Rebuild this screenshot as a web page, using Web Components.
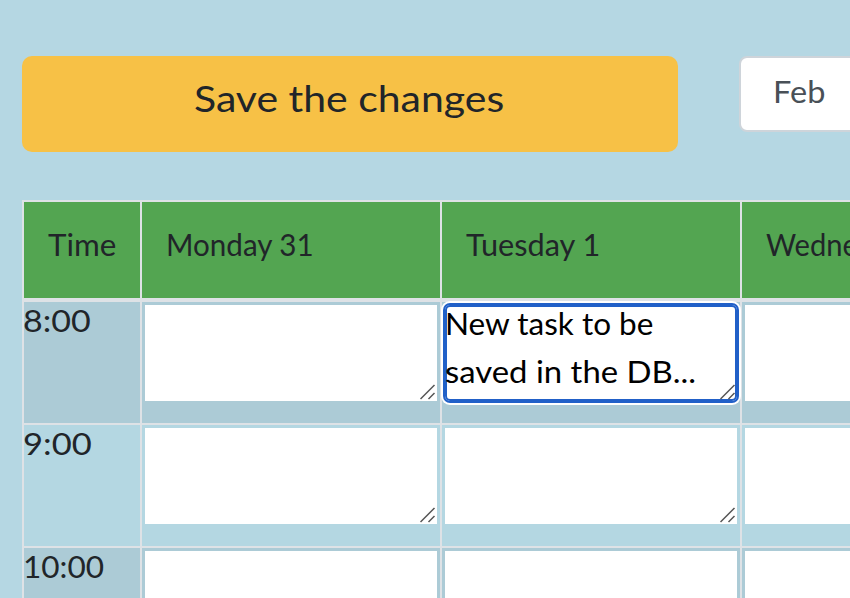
<!DOCTYPE html>
<html lang="en">
<head>
<meta charset="utf-8">
<title>Weekly planner</title>
<style>
html,body{margin:0;height:100%;overflow:hidden;background:#b5d7e3}
</style>
</head>
<body>
<week-planner></week-planner>
<script>
const define = (name, html, setup) => {
  const t = document.createElement('template');
  t.innerHTML = html;
  customElements.define(name, class extends HTMLElement {
    constructor() {
      super();
      this.attachShadow({mode: 'open'}).append(t.content.cloneNode(true));
    }
    connectedCallback() { if (setup) setup(this, this.shadowRoot); }
  });
};

// Text stretched horizontally to the width given in its "width" attribute.
define('fit-text', `
<style>
:host{display:block;white-space:nowrap}
span{display:inline-block;transform-origin:0 50%}
</style><span></span>`, (el, root) => {
  const s = root.querySelector('span');
  s.textContent = el.getAttribute('text');
  const w = +el.getAttribute('width');
  el.style.width = w + 'px';
  s.style.transform = `scaleX(${w / s.offsetWidth})`;
});

define('save-button', `
<style>
:host{display:flex;justify-content:center;box-sizing:border-box;width:656px;height:96px;padding:20px 2px 0 0;border-radius:10px;background:#f7c146;color:#212529;font-size:37px;line-height:44px}
</style><slot></slot>`);

define('month-field', `
<style>
:host{display:block;box-sizing:border-box;width:240px;height:76px;padding:16px 32px;border:2px solid #ced4da;border-radius:8px;background:#fff;color:#495057}
</style><slot></slot>`);

define('head-cell', `
<style>
:host{display:block;box-sizing:border-box;height:96px;padding:25px 0 0 24px;background:#53a551;overflow:hidden}
</style><slot></slot>`);

define('time-cell', `
<style>
:host{display:block;box-sizing:border-box;height:121px;padding-top:1px;background:var(--row)}
::slotted(*){margin-left:-1px}
</style><slot></slot>`);

define('task-cell', `
<style>
:host{display:block;box-sizing:border-box;height:121px;padding:3px;background:var(--row)}
.area{display:grid;grid-template-columns:1fr;width:292px;height:96px;background:#fff}
.text,svg{grid-area:1/1}
.text{display:flex;flex-direction:column;gap:14px;line-height:34px;color:#000;padding-top:1px}
svg{place-self:end;margin:0 1px 1px 0}
:host([focused]) .area{border-radius:5px;box-shadow:0 0 0 2px #2160c8,inset 0 0 0 2px #2160c8,0 0 0 4px #fff;position:relative}
</style>
<div class="area"><div class="text"><slot></slot></div>
<svg width="16" height="16" viewBox="0 0 16 16" fill="none" stroke="#555" stroke-width="1.5"><path d="M.5 15 14.5 1M8.500 15l6-6"/></svg></div>`);

define('week-table', `
<style>
:host{display:block;width:1020px;padding:2px;background:#dee2e6}
.row{display:grid;grid-template-columns:116px 298px 298px 298px;column-gap:2px;margin-bottom:2px;--row:#b4d7e2}
.head{margin-bottom:4px}
.odd{--row:#accbd6}
</style>
<div class="row head">
<head-cell><fit-text text="Time" width="68"></fit-text></head-cell>
<head-cell><fit-text text="Monday 31" width="148"></fit-text></head-cell>
<head-cell><fit-text text="Tuesday 1" width="134"></fit-text></head-cell>
<head-cell><fit-text text="Wednesday 2" width="174"></fit-text></head-cell>
</div>
<div class="row odd">
<time-cell><fit-text text="8:00" width="68"></fit-text></time-cell>
<task-cell></task-cell>
<task-cell focused><fit-text text="New task to be" width="208"></fit-text><fit-text text="saved in the DB..." width="251"></fit-text></task-cell>
<task-cell></task-cell>
</div>
<div class="row">
<time-cell><fit-text text="9:00" width="69"></fit-text></time-cell>
<task-cell></task-cell><task-cell></task-cell><task-cell></task-cell>
</div>
<div class="row odd">
<time-cell><fit-text text="10:00" width="81"></fit-text></time-cell>
<task-cell></task-cell><task-cell></task-cell><task-cell></task-cell>
</div>`);

define('week-planner', `
<style>
:host{display:block;box-sizing:border-box;width:850px;height:598px;padding:56px 0 0 22px;overflow:hidden;background:#b5d7e3;color:#212529;font:400 30px/35px Lato,"Liberation Sans",sans-serif}
.bar{display:flex;gap:61px;height:144px;width:1000px;align-items:flex-start}
save-button,month-field{flex:none}
</style>
<div class="bar"><save-button><fit-text text="Save the changes" width="310"></fit-text></save-button>
<month-field><fit-text text="Feb" width="52"></fit-text></month-field></div>
<week-table></week-table>`);
</script>
</body>
</html>
